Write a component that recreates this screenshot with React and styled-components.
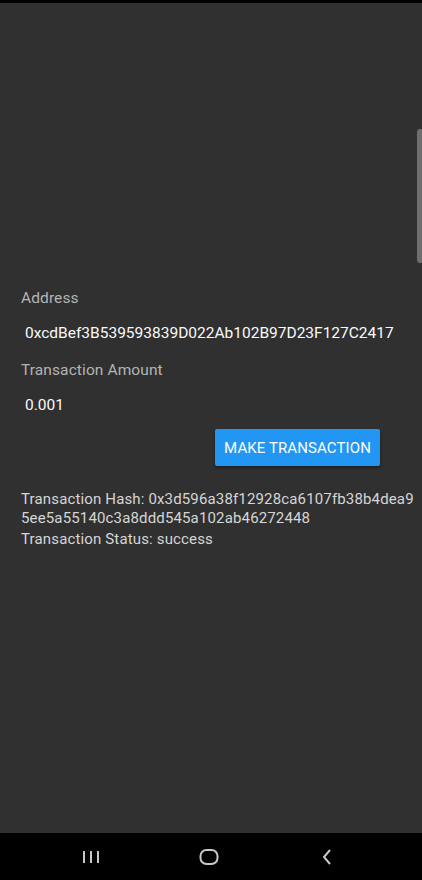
import React from "react";
import styled, { createGlobalStyle } from "styled-components";

const GlobalStyle = createGlobalStyle`
  html, body {
    margin: 0;
    padding: 0;
    background: #000;
  }
  body {
    font-family: Roboto, "Noto Sans", sans-serif;
  }
`;

const Screen = styled.div`
  width: 422px;
  height: 880px;
  display: flex;
  flex-direction: column;
  position: relative;
  overflow: hidden;
  background: #000;
`;

const TopEdge = styled.div`
  height: 3px;
  background: #000;
`;

const Content = styled.div`
  flex: 1;
  background: #303030;
  padding: 285px 0 0 21px;
  display: flex;
  flex-direction: column;
`;

const Label = styled.div`
  font-size: 15.5px;
  line-height: 20px;
  color: #b4b4b4;
  letter-spacing: 0.1px;
  margin-top: ${(p) => p.$top || 0}px;
`;

const Value = styled.div`
  font-size: 15.5px;
  line-height: 20px;
  color: #fafafa;
  padding-left: 4px;
  margin-top: ${(p) => p.$top || 0}px;
`;

const ButtonRow = styled.div`
  display: flex;
  justify-content: flex-end;
  padding-right: 42px;
  margin-top: 14px;
`;

const Button = styled.button`
  background: #2196f3;
  color: #fff;
  border: none;
  border-radius: 2px;
  height: 37px;
  width: 165px;
  font-family: Roboto, "Noto Sans", sans-serif;
  font-size: 15px;
  letter-spacing: 0.1px;
  padding: 0;
  box-shadow: 0 2px 3px rgba(0, 0, 0, 0.35);
`;

const Info = styled.div`
  font-size: 15px;
  line-height: 19px;
  letter-spacing: 0.15px;
  color: #d6d6d6;
  max-width: 397px;
  margin-top: ${(p) => p.$top || 0}px;
  word-break: break-all;
`;

const ScrollThumb = styled.div`
  position: absolute;
  right: 0;
  top: 129px;
  width: 5px;
  height: 134px;
  background: #6e6e6e;
  border-radius: 3px 0 0 3px;
`;

const NavBar = styled.div`
  height: 47px;
  background: #000;
  display: flex;
  align-items: center;
  justify-content: center;
  gap: 94px;
  padding-right: 5px;
`;

const NavIcon = styled.svg`
  width: 24px;
  height: 24px;
  color: #c8c8c8;
`;

export default function App() {
  return (
    <Screen>
      <GlobalStyle />
      <TopEdge />
      <Content>
        <Label>Address</Label>
        <Value $top={15}>0xcdBef3B539593839D022Ab102B97D23F127C2417</Value>
        <Label $top={17}>Transaction Amount</Label>
        <Value $top={15}>0.001</Value>
        <ButtonRow>
          <Button>MAKE TRANSACTION</Button>
        </ButtonRow>
        <Info $top={24}>
          Transaction Hash: 0x3d596a38f12928ca6107fb38b4dea95ee5a55140c3a8ddd545a102ab46272448
        </Info>
        <Info $top={2}>Transaction Status: success</Info>
      </Content>
      <ScrollThumb />
      <NavBar>
        <NavIcon viewBox="0 0 24 24" fill="none" stroke="currentColor" strokeWidth="2">
          <path d="M5 6v12M12 6v12M19 6v12" />
        </NavIcon>
        <NavIcon viewBox="0 0 24 24" fill="none" stroke="currentColor" strokeWidth="2">
          <rect x="3.5" y="5" width="17" height="14" rx="6" />
        </NavIcon>
        <NavIcon viewBox="0 0 24 24" fill="none" stroke="currentColor" strokeWidth="2">
          <path d="M15 5l-6 7 6 7" />
        </NavIcon>
      </NavBar>
    </Screen>
  );
}
